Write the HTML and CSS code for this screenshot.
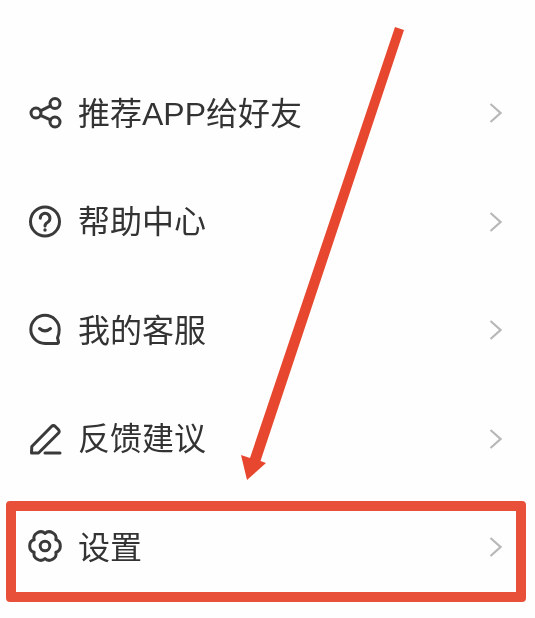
FILE: index.html

```html
<!DOCTYPE html>
<html lang="zh-CN">
  <head>
    <meta charset="UTF-8" />
    <meta name="viewport" content="width=device-width, initial-scale=1.0" />
    <title>设置入口</title>
    <link rel="stylesheet" href="styles.css">
  </head>

  <body>
    <div class="screen">
      <ul class="menu">
        <li class="menu-row">
          <svg class="icon" viewBox="0 0 34 34">
            <circle cx="8" cy="17" r="5" />
            <circle cx="27" cy="7.5" r="5" />
            <circle cx="27" cy="26" r="5" />
            <path d="M12.5 14.8 22.5 9.8M12.5 19.3 22.5 23.8" />
          </svg>
          <span class="menu-label">推荐APP给好友</span>
          <svg class="chevron" viewBox="0 0 13 20"><path d="M1.5 1 11.5 10 1.5 19" /></svg>
        </li>
        <li class="menu-row">
          <svg class="icon" viewBox="0 0 34 34">
            <circle cx="17" cy="16.5" r="14.5" />
            <path d="M12.3 13.2a4.8 4.8 0 1 1 7.4 4c-1.7 1-2.7 2-2.7 3.8" />
            <circle class="dot" cx="17" cy="25" r="1.7" />
          </svg>
          <span class="menu-label">帮助中心</span>
          <svg class="chevron" viewBox="0 0 13 20"><path d="M1.5 1 11.5 10 1.5 19" /></svg>
        </li>
        <li class="menu-row">
          <svg class="icon" viewBox="0 0 34 34">
            <path d="M17 30.5C9 30.5 2.800 24 2.800 16.500a14.200 14.200 0 0 1 28.400 0c0 3.200-.6 6-1.700 8.300l1 4c.2 1-.4 1.700-1.400 1.700Z" />
            <path d="M11.5 15.5q5.5 4.800 11 0" />
          </svg>
          <span class="menu-label">我的客服</span>
          <svg class="chevron" viewBox="0 0 13 20"><path d="M1.5 1 11.5 10 1.5 19" /></svg>
        </li>
        <li class="menu-row">
          <svg class="icon" viewBox="0 0 34 34">
            <path d="M3.500 31 3.800 24.500 23.500 4.500c1.200-1.200 2.600-1.200 3.800 0l3 3c1.200 1.200 1.200 2.600 0 3.800L10.500 31Z" />
            <path d="M17 31H32" />
          </svg>
          <span class="menu-label">反馈建议</span>
          <svg class="chevron" viewBox="0 0 13 20"><path d="M1.5 1 11.5 10 1.5 19" /></svg>
        </li>
        <li class="menu-row">
          <svg class="icon" viewBox="0 0 34 34">
            <path d="M27.830 9.750C33.820 11.180 33.820 20.820 27.830 22.250C29.590 28.160 21.230 32.980 17 28.500C12.770 32.980 4.410 28.160 6.170 22.250C.18 20.820.18 11.180 6.170 9.750C4.410 3.840 12.770-.98 17 3.500C21.230-.98 29.590 3.840 27.830 9.750Z" />
            <circle cx="17" cy="16" r="4.800" />
          </svg>
          <span class="menu-label">设置</span>
          <svg class="chevron" viewBox="0 0 13 20"><path d="M1.5 1 11.5 10 1.5 19" /></svg>
        </li>
      </ul>

      <div class="highlight-box"></div>
      <svg class="arrow" viewBox="0 0 535 618">
        <polygon points="395,27 404,30 260.500,461 266,463 247,480 241,455 250,458" />
      </svg>
    </div>
  </body>
</html>
```

FILE: styles.css

```css
body {
  margin: 0;
  background: #fefefe;
}

.screen {
  position: relative;
  width: 535px;
  height: 618px;
  overflow: hidden;
  font-family: "Liberation Sans", "Noto Sans CJK SC", sans-serif;
}

.menu {
  list-style: none;
  margin: 0;
  padding: 59px 0 0;
  filter: blur(0.5px);
}

.menu-row {
  display: flex;
  align-items: center;
  gap: 16px;
  height: 108.5px;
  padding: 0 33px 0 28px;
}

.menu-label {
  flex: 1;
  margin-top: 1px;
  font-size: 32px;
  line-height: 40px;
  color: #333;
}

.icon {
  width: 34px;
  height: 34px;
  overflow: visible;
  fill: none;
  stroke: #3a3a3a;
  stroke-width: 3;
  stroke-linecap: round;
  stroke-linejoin: round;
}

.icon .dot {
  fill: #3a3a3a;
  stroke: none;
}

.chevron {
  width: 13px;
  height: 20px;
  fill: none;
  stroke: #b8b8b8;
  stroke-width: 2.2;
}

.highlight-box {
  position: absolute;
  left: 6px;
  top: 501px;
  width: 520px;
  height: 101px;
  box-sizing: border-box;
  border: 10px solid #e8503a;
  border-radius: 4px;
}

.arrow {
  position: absolute;
  left: 0;
  top: 0;
  width: 535px;
  height: 618px;
  fill: #e8472f;
}
```
